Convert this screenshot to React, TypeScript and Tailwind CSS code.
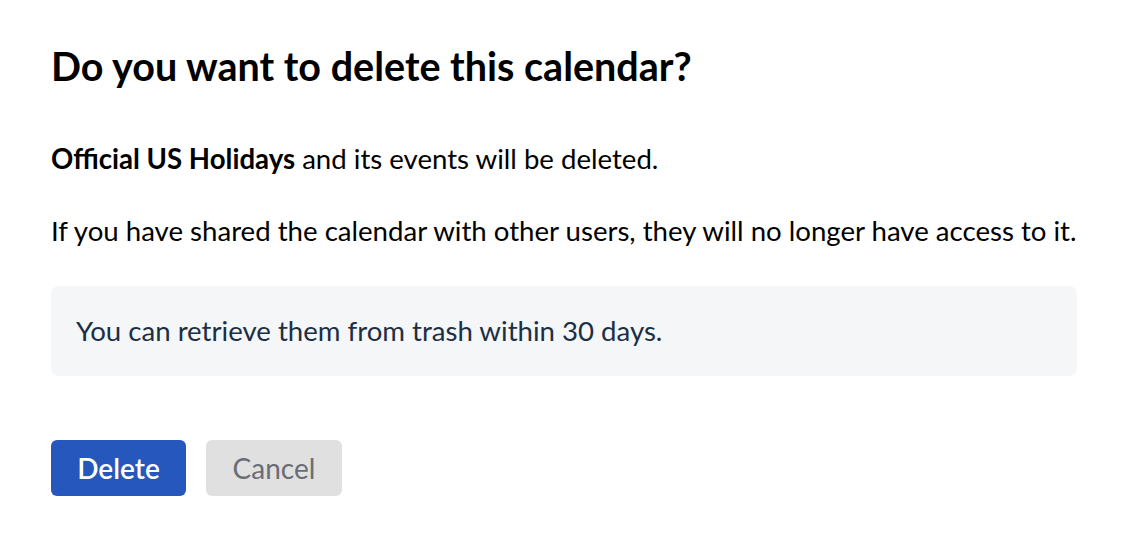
export default function App() {
  return (
    <div className="min-h-screen bg-white font-['Lato',sans-serif] pl-[51px] pr-[55px] pt-[42px]">
      <h1 className="text-[39.5px] leading-[48px] font-bold text-black">Do you want to delete this calendar?</h1>

      <p className="mt-[51px] text-[27.6px] leading-[36px] text-black">
        <span className="font-bold">Official US Holidays</span> and its events will be deleted.
      </p>
      <p className="mt-[36px] text-[27.6px] leading-[36px] text-black">
        If you have shared the calendar with other users, they will no longer have access to it.
      </p>

      <div className="mt-[37px] h-[90px] rounded-lg bg-[#f5f6f8] px-[25px] flex items-center">
        <p className="text-[27.6px] text-[#1b2f45]">You can retrieve them from trash within 30 days.</p>
      </div>

      <div className="mt-[64px] flex gap-[20px]">
        <button className="w-[135px] h-[56px] rounded-md bg-[#2557bd] text-white text-[28px] font-semibold">Delete</button>
        <button className="w-[136px] h-[56px] rounded-md bg-[#e0e0e0] text-[#6a6d75] text-[28px]">Cancel</button>
      </div>
    </div>
  );
}
